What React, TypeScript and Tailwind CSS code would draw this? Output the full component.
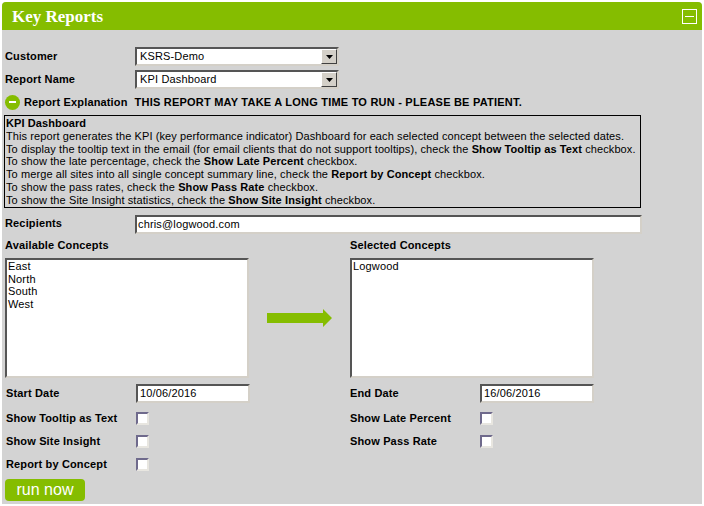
const sunken =
  "border-2 border-t-[#555] border-l-[#555] border-r-[#d4d0c8] border-b-[#d4d0c8] bg-white";

function Label({ children, className = "" }: { children: React.ReactNode; className?: string }) {
  return <div className={`w-[130px] shrink-0 font-bold ${className}`}>{children}</div>;
}

function Select({ value }: { value: string }) {
  return (
    <div className={`${sunken} flex h-[19px] w-[204px] items-center justify-between pl-[3px]`}>
      <span>{value}</span>
      <span className="flex h-[15px] w-[16px] items-center justify-center border border-t-white border-l-white border-r-[#404040] border-b-[#404040] bg-[#d4d0c8]">
        <svg width="7" height="4" viewBox="0 0 7 4">
          <path d="M0 0h7L3.5 4z" fill="#000" />
        </svg>
      </span>
    </div>
  );
}

function DateInput({ value }: { value: string }) {
  return <div className={`${sunken} flex h-[19px] w-[114px] items-center pl-[2px]`}>{value}</div>;
}

function Check() {
  return (
    <div className="h-[13px] w-[13px] border-2 border-t-[#6f6a8c] border-l-[#6f6a8c] border-r-[#e8e6e0] border-b-[#e8e6e0] bg-white" />
  );
}

function CheckRow({ label }: { label: string }) {
  return (
    <div className="flex h-[13px] items-center">
      <Label>{label}</Label>
      <Check />
    </div>
  );
}

function ListBox({ items }: { items: string[] }) {
  return (
    <div className={`${sunken} h-[120px] w-[244px] pl-[1px] leading-[12.5px]`}>
      {items.map((item) => (
        <div key={item}>{item}</div>
      ))}
    </div>
  );
}

export default function App() {
  return (
    <div className="h-[506px] w-[704px] bg-white p-[2px] text-[11px] leading-[13px] tracking-[0.15px] text-black [font-family:'Liberation_Sans',Arial,sans-serif]">
      <div className="h-[502px] w-[700px] overflow-hidden rounded-tl-[4px] rounded-tr-[4px] bg-[#d3d3d3]">
        <div className="flex h-[28px] items-center justify-between bg-[#85bd00] pl-[10px] pr-[5px]">
          <span className="text-[17px] font-bold tracking-normal text-white [font-family:'Liberation_Serif',serif]">
            Key Reports
          </span>
          <span className="flex h-[15px] w-[15px] items-center justify-center border border-white">
            <span className="h-[1px] w-[9px] bg-white" />
          </span>
        </div>

        <div className="pl-[3px] pt-[17px]">
          <div className="flex items-center">
            <Label>Customer</Label>
            <Select value="KSRS-Demo" />
          </div>
          <div className="mt-[4px] flex items-center">
            <Label>Report Name</Label>
            <Select value="KPI Dashboard" />
          </div>

          <div className="mt-[5px] flex h-[16px] items-center font-bold">
            <span className="flex h-[15px] w-[15px] items-center justify-center rounded-full bg-[#85bd00]">
              <span className="h-[2px] w-[7px] bg-white" />
            </span>
            <span className="ml-[4px]">Report Explanation</span>
            <span className="ml-[7px] tracking-[0.22px]">THIS REPORT MAY TAKE A LONG TIME TO RUN - PLEASE BE PATIENT.</span>
          </div>

          <div className="-ml-[1px] mt-[5px] h-[93px] w-[637px] whitespace-nowrap border border-black pl-[1px] pt-[1px] leading-[12.8px] tracking-[0.1px]">
            <div className="font-bold">KPI Dashboard</div>
            <div>This report generates the KPI (key performance indicator) Dashboard for each selected concept between the selected dates.</div>
            <div>To display the tooltip text in the email (for email clients that do not support tooltips), check the <b>Show Tooltip as Text</b> checkbox.</div>
            <div>To show the late percentage, check the <b>Show Late Percent</b> checkbox.</div>
            <div>To merge all sites into all single concept summary line, check the <b>Report by Concept</b> checkbox.</div>
            <div>To show the pass rates, check the <b>Show Pass Rate</b> checkbox.</div>
            <div>To show the Site Insight statistics, check the <b>Show Site Insight</b> checkbox.</div>
          </div>

          <div className="mt-[7px] flex items-center">
            <Label className="pb-[2px]">Recipients</Label>
            <div className={`${sunken} flex h-[19px] w-[507px] items-center pl-[1px]`}>
              chris@logwood.com
            </div>
          </div>

          <div className="mt-[5px] flex">
            <div className="w-[345px]">
              <div className="font-bold">Available Concepts</div>
              <div className="mt-[6px] flex items-center">
                <ListBox items={["East", "North", "South", "West"]} />
                <svg className="ml-[18px]" width="65" height="18" viewBox="0 0 65 18">
                  <path d="M0 4h56V0l9 9-9 9v-4H0z" fill="#85bd00" />
                </svg>
              </div>
            </div>
            <div>
              <div className="font-bold">Selected Concepts</div>
              <div className="mt-[6px]">
                <ListBox items={["Logwood"]} />
              </div>
            </div>
          </div>

          <div className="mt-[6px] flex">
            <div className="w-[345px] pl-[1px]">
              <div className="flex items-center">
                <Label>Start Date</Label>
                <DateInput value="10/06/2016" />
              </div>
              <div className="mt-[9px] flex flex-col gap-[10px]">
                <CheckRow label="Show Tooltip as Text" />
                <CheckRow label="Show Site Insight" />
                <CheckRow label="Report by Concept" />
              </div>
            </div>
            <div>
              <div className="flex items-center">
                <Label>End Date</Label>
                <DateInput value="16/06/2016" />
              </div>
              <div className="mt-[9px] flex flex-col gap-[10px]">
                <CheckRow label="Show Late Percent" />
                <CheckRow label="Show Pass Rate" />
              </div>
            </div>
          </div>

          <button className="mt-[8px] block h-[22px] w-[80px] rounded-[4px] bg-[#85bd00] text-center text-[16px] leading-[22px] tracking-normal text-white">
            run now
          </button>
        </div>
      </div>
    </div>
  );
}
